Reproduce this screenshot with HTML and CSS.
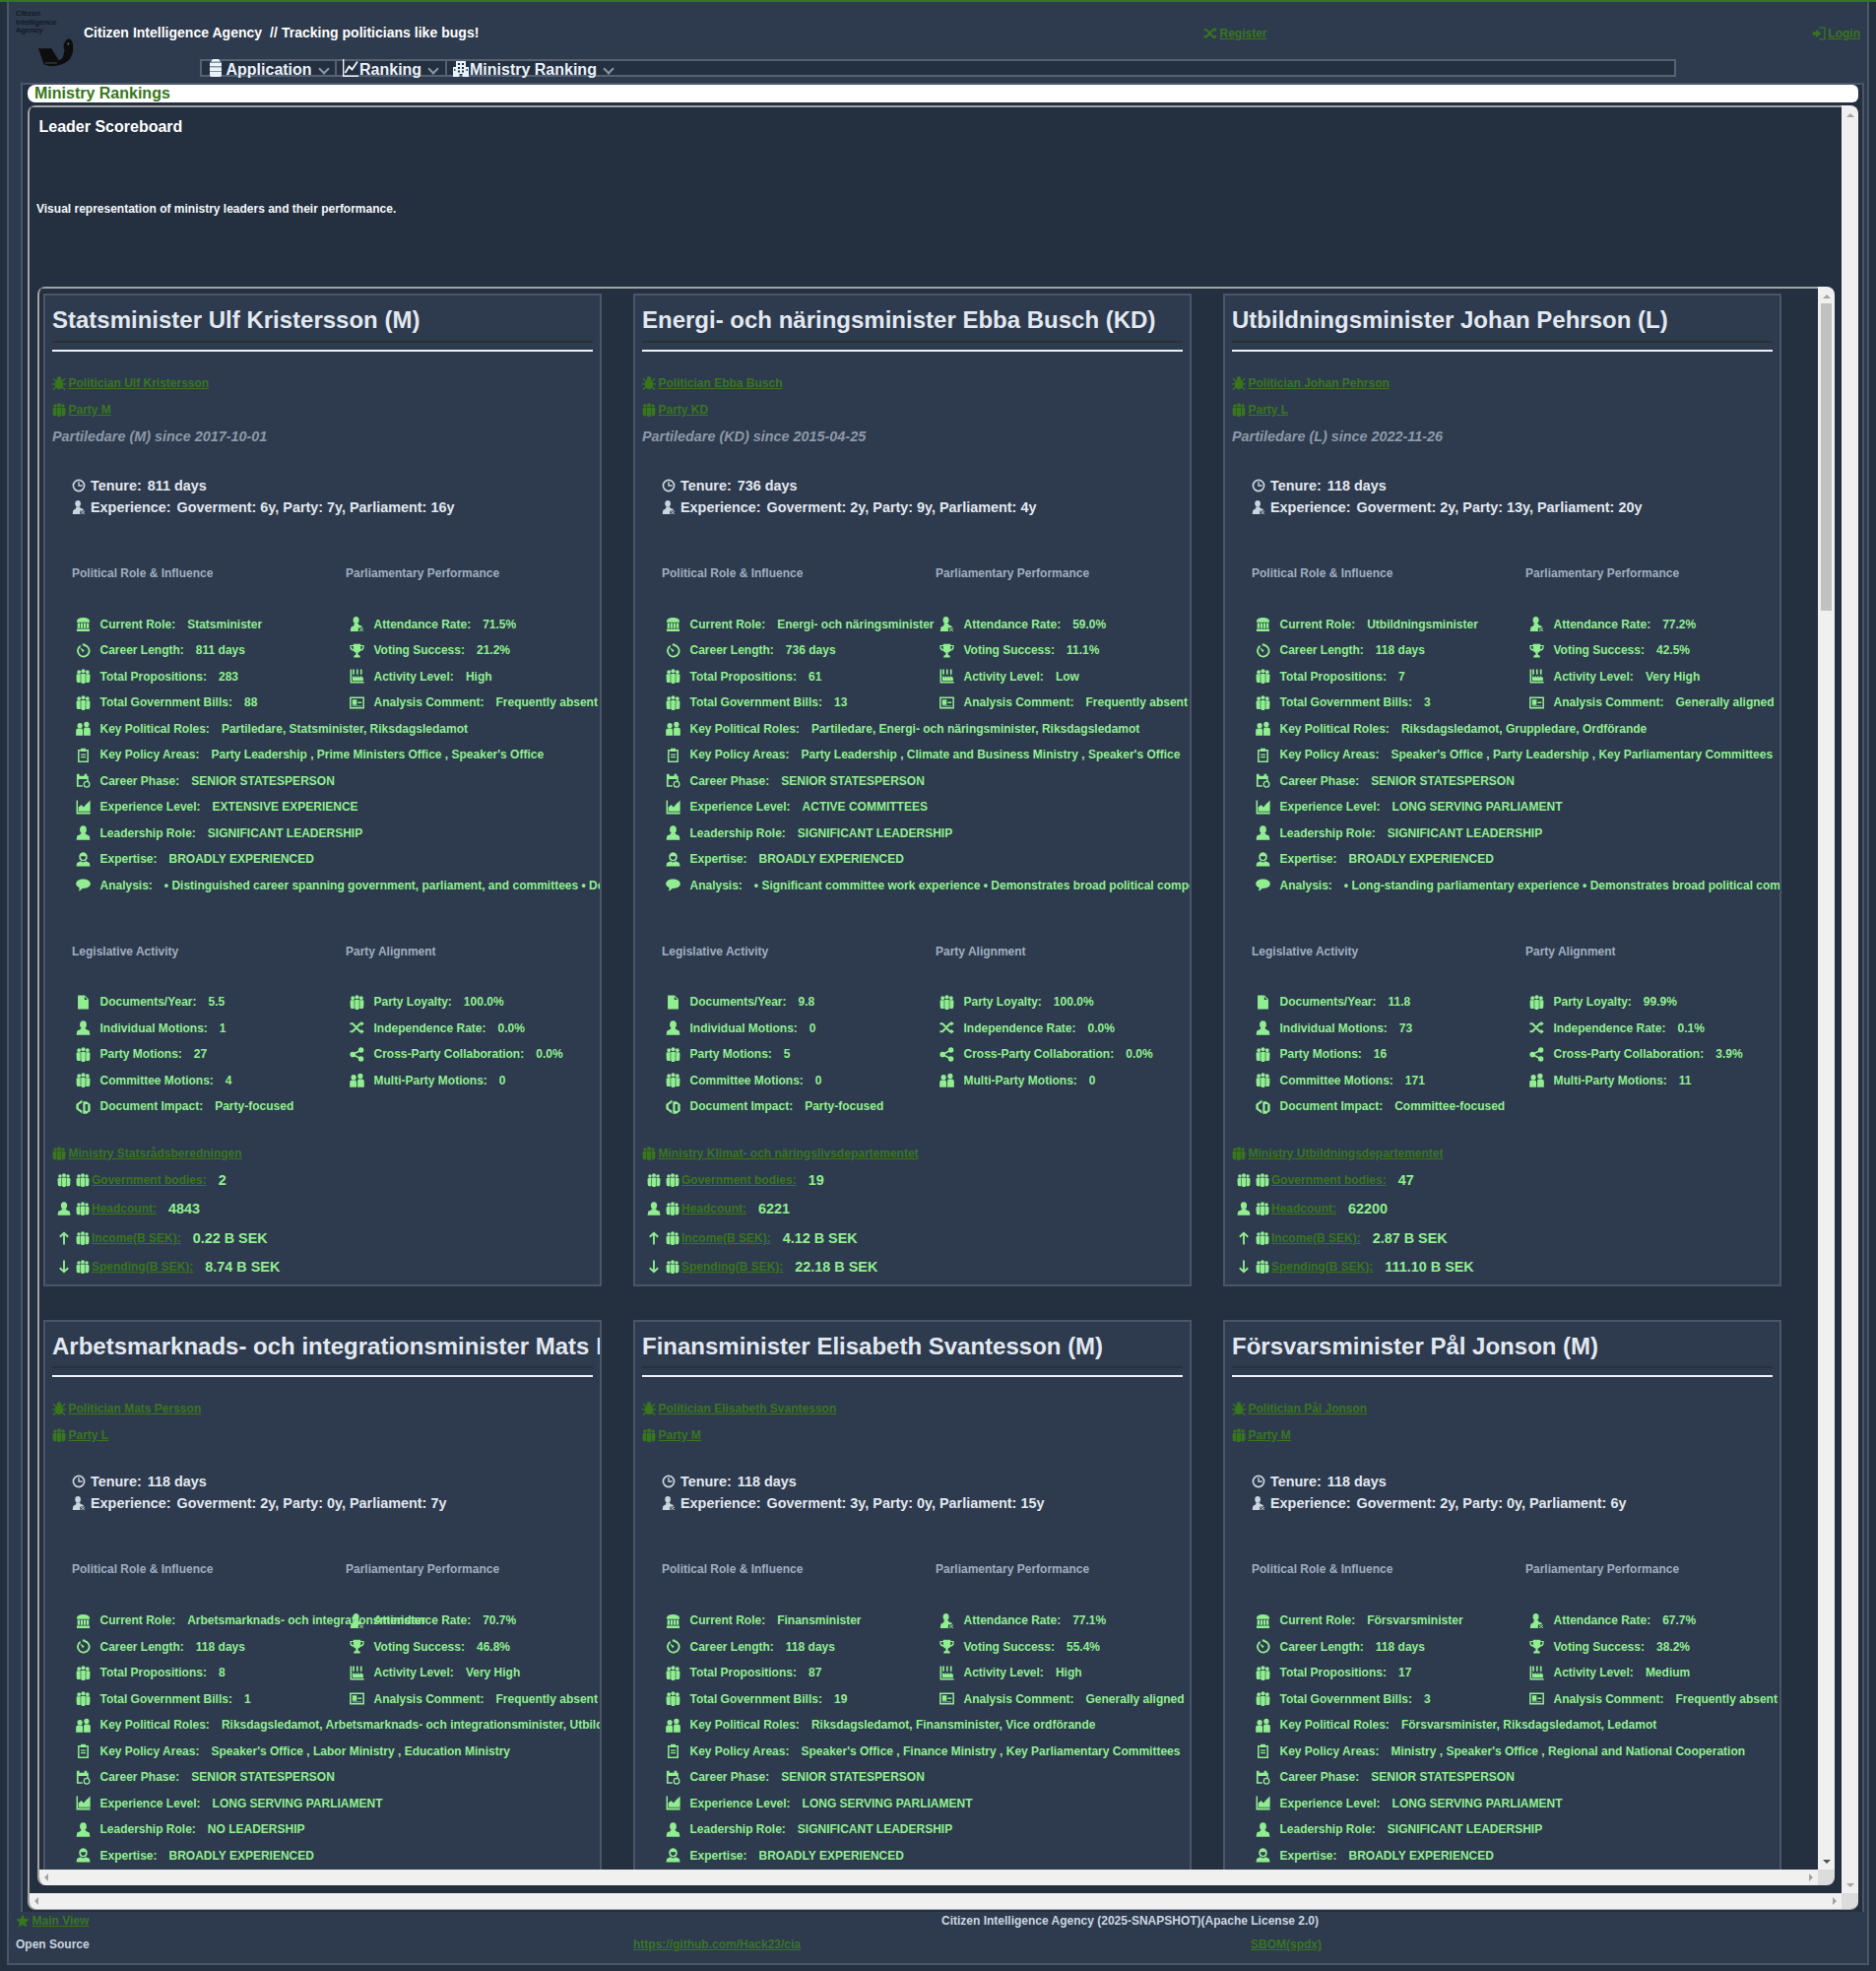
FILE: index.html
```html
<!DOCTYPE html>
<html>
<head>
    <title>Citizen Intelligence Agency</title>
    <link rel="stylesheet" href="styles.css">
</head>
<body>
<svg class="sprites" xmlns="http://www.w3.org/2000/svg">
    <symbol id="bug" viewBox="0 0 16 16"><ellipse cx="8" cy="9.400" rx="4.800" ry="5.800"/><circle cx="8" cy="3" r="2.600"/><path d="M1 2.500l4 3.500M15 2.500l-4 3.500M0 9h4M12 9h4M1 15.500l4-3.500M15 15.500l-4-3.500" stroke="currentColor" stroke-width="1.600"/></symbol>
    <symbol id="people" viewBox="0 0 16 16"><circle cx="3.400" cy="3.400" r="2"/><circle cx="12.600" cy="3.400" r="2"/><circle cx="8" cy="2.500" r="2.200"/><path d="M.6 7Q.6 5.600 2 5.600H5v9.400H2.500Q1 15 .8 13zM15.400 7Q15.400 5.600 14 5.600H11v9.400h2.500Q15 15 15.200 13zM5.600 5.200h4.800v9.200L9.400 16H6.600L5.600 14.400z"/></symbol>
    <symbol id="clock" viewBox="0 0 16 16"><circle cx="8" cy="8" r="6.400" fill="none" stroke="currentColor" stroke-width="1.900"/><path d="M7.200 3.600h1.600v3.600h3.400v1.600H7.200z"/></symbol>
    <symbol id="userx" viewBox="0 0 16 16"><ellipse cx="7" cy="3.800" rx="3.200" ry="3.800"/><path d="M4.800 7.500h4.400l1 1.600L13 10l1 2H9.500v4H.8l.7-4.500 3.300-2z"/><path d="M10.500 12.500l4.500 3.500M15 12.500l-4.500 3.500" stroke="currentColor" stroke-width="1"/></symbol>
    <symbol id="bank" viewBox="0 0 16 16"><path d="M1 5Q1.500 1 8 1T15 5V6.200H1zM1.800 7h2.600v5.400H1.800zM5.200 7h2.400v5.400H5.200zM8.400 7h2.400v5.400H8.400zM11.600 7h2.600v5.400h-2.600zM1 13.200h14V16H1z"/></symbol>
    <symbol id="timer" viewBox="0 0 16 16"><path d="M5 3A6.200 6.200 0 1 0 9 2.100" fill="none" stroke="currentColor" stroke-width="2"/><path d="M7.200.6h2.800v2H7.200zM4.200 4.600l5 3.200-1.600 2z"/></symbol>
    <symbol id="users" viewBox="0 0 16 16"><circle cx="4.400" cy="5" r="2.800"/><circle cx="11.600" cy="3.600" r="2.800"/><path d="M.2 15.600v-5Q.2 8 3 8h2.800Q7.600 8 7.600 10.600v5zM8.600 15.600V9.400Q8.600 6.800 10 6.800h3.200Q15.800 6.800 15.800 9.600v6z"/></symbol>
    <symbol id="clip" viewBox="0 0 16 16"><path d="M3 2.800h10V15.200H3z" fill="none" stroke="currentColor" stroke-width="1.600"/><path d="M5.400.8h5.200v3.400H5.400zM5.400 6.800h5.200v1.400H5.400zM5.400 9.600h5.200v1.400H5.400z"/></symbol>
    <symbol id="calclock" viewBox="0 0 16 16"><path d="M1 .8h2.800v2.200h5.400V.8h2.800v2.200h1.600v6h-1.600V6.400H2.800v6.600h4.400v1.600H1z"/><circle cx="11.800" cy="12" r="3" fill="none" stroke="currentColor" stroke-width="1.400"/></symbol>
    <symbol id="area" viewBox="0 0 16 16"><path d="M.6.600h1.600v12.600H15.600V15.400H.6z"/><path d="M2.800 12.400V8l3.200-2.600 2.400 2.600 3-3.400L15.600.6v11.800z"/></symbol>
    <symbol id="user" viewBox="0 0 16 16"><ellipse cx="8" cy="4.400" rx="3.600" ry="4.200"/><path d="M5.400 8.400h5.200l.4 1.200 3.600 1.600.8 4.400H.6l.8-4.400 3.600-1.600z"/></symbol>
    <symbol id="doctor" viewBox="0 0 16 16"><path fill-rule="evenodd" d="M8 .4a4.500 4.500 0 0 1 4.400 5.600q0 3.400-4.400 3.800-4.400-.4-4.400-3.800A4.500 4.500 0 0 1 8 .4zM5.400 4.400v1.800q.4 2 2.600 2.200 2.200-.2 2.600-2.200V4.400z"/><path d="M5 9.800 8 11.200l3-1.400 3.800 1.800.7 3.900H.5l.7-3.900z"/></symbol>
    <symbol id="comment" viewBox="0 0 16 16"><path d="M8 1.600c4.300 0 7.800 2.100 7.800 5S12.300 11.600 8 11.600l-.9 0Q5.600 14 2.800 14.400q1-1.400 1.100-3.600C1.800 10 .2 8.500.2 6.600.2 3.700 3.700 1.600 8 1.600z"/></symbol>
    <symbol id="file" viewBox="0 0 16 16"><path d="M2.200.6h7.400l4.200 4.200v10.600H2.200zM9.400 1.800v3.400h3.200z" fill-rule="evenodd"/></symbol>
    <symbol id="random" viewBox="0 0 16 16"><path d="M.5 3.500h2.800l8 8.500H13M.5 12h2.800l8-8.500H13" fill="none" stroke="currentColor" stroke-width="2.100"/><path d="M12.400.8l3.400 2.700-3.400 2.700zM12.400 9.300l3.400 2.700-3.400 2.700z"/></symbol>
    <symbol id="share" viewBox="0 0 16 16"><circle cx="3.400" cy="8" r="3"/><circle cx="12.400" cy="3.200" r="2.900"/><circle cx="12.400" cy="12.800" r="2.900"/><path d="M3.400 8l9-4.800M3.400 8l9 4.800" stroke="currentColor" stroke-width="1.800"/></symbol>
    <symbol id="trophy" viewBox="0 0 16 16"><path d="M4 .8h8V2h3.600v2.400Q15.400 7.800 11.800 8.200 11 9.800 9.200 10.200v2.200l2.200 1.200v1.800H4.600v-1.800l2.200-1.200v-2.200Q5 9.800 4.200 8.200.6 7.800.4 4.400V2H4zM1.800 3.200v1.200Q2 6 4 6.600V3.200zM14.200 3.200H12v3.400q2-.6 2.200-2.200z" fill-rule="evenodd"/></symbol>
    <symbol id="factory" viewBox="0 0 16 16"><path d="M.6.600h1.700v13.200H15.600v1.700H.6z"/><path d="M3.400.6h1.800v5.600H3.400zM7.400.6h1.800v5.600H7.400zM11.600.6h1.800v5.600h-1.800zM3.200 13V7.400l2.800 2.200V7.400l2.800 2.200V7.400l2.800 2.200V7.400l3.200 2.200V13z"/></symbol>
    <symbol id="idcard" viewBox="0 0 16 16"><path d="M.9 2.400h14.200v11.200H.9z" fill="none" stroke="currentColor" stroke-width="1.600"/><path d="M3 4.600h4.800v5.800H3zM9 7h4v1.400H9zM3 11.200h10v.9H3z"/></symbol>
    <symbol id="up" viewBox="0 0 16 16"><path d="M8 15.500V2M3.200 6.600 8 2l4.800 4.600" fill="none" stroke="currentColor" stroke-width="2.100"/></symbol>
    <symbol id="down" viewBox="0 0 16 16"><path d="M8 .5V14M3.200 9.400 8 14l4.800-4.600" fill="none" stroke="currentColor" stroke-width="2.100"/></symbol>
    <symbol id="impact" viewBox="0 0 16 16"><path d="M6.800.6.400 5.400v5.200L6.800 15.400V12.200L3 9.800V6.200L6.800 3.800z"/><path d="M7.800 2.400h3.800l4 2.800v7.600l-4 2.800H7.800zM10.200 5.400v7h2.800v-7z" fill-rule="evenodd"/></symbol>
    <symbol id="star" viewBox="0 0 16 16"><path d="M8 .5l2.300 5.200 5.500.5-4.200 3.700 1.300 5.600L8 12.600l-4.900 2.900 1.300-5.600L.2 6.200l5.500-.5z"/></symbol>
    <symbol id="signin" viewBox="0 0 16 16"><path d="M8 1.200h6.800v13.600H8" fill="none" stroke="currentColor" stroke-width="1.400"/><path d="M.8 6.200h4V3.400L10.800 8 4.800 12.600V9.800h-4z"/></symbol>
    <symbol id="server" viewBox="0 0 12 18"><path d="M3 0h6l2 2.800H1zM0 3.600h12v4H0zM0 8.200h12v4H0zM0 12.800h12v3.400q0 1.800-1.800 1.800H1.800Q0 18 0 16.200z"/></symbol>
    <symbol id="line" viewBox="0 0 16 18"><path d="M.7 0v17.200H16" fill="none" stroke="currentColor" stroke-width="1.400"/><path d="M2.500 14l4-6.500 3 3L15 2.500" fill="none" stroke="currentColor" stroke-width="1.800"/></symbol>
    <symbol id="building" viewBox="0 0 16 18"><path fill-rule="evenodd" d="M3 2h10v6h3v10H9.500v-3h-3v3H0V8h3zM5 4v2h2V4zM9 4v2h2V4zM5 8v2h2V8zM9 8v2h2V8zM5 11.500v2h2v-2zM9 11.500v2h2v-2zM1.200 10v2h1.200v-2zM13.500 10v2h1.300v-2z"/></symbol>
</svg>

<div class="app">
    <div class="top">
        <div class="logo">
            <div class="logo-text">Citizen<br>Intelligence<br>Agency</div>
            <svg class="logo-mark" viewBox="0 0 40 32"><path d="M1 11H15L23 24l4-3 2-8Q27 8 29 5 31 0 35 1 38 3 38 8 39 18 33 24 26 30 14 30L7 28z"/><path d="M8 26.500h13" stroke="#6b7684" stroke-width=".6"/><circle cx="33" cy="6" r="1" fill="#6b7684"/></svg>
        </div>
        <div class="top-row">
            <div class="brand">Citizen Intelligence Agency &nbsp;// Tracking politicians like bugs!</div>
            <div class="top-link"><svg class="ic-link"><use href="#random"/></svg><a href="#">Register</a></div>
            <div class="top-link"><svg class="ic-link"><use href="#signin"/></svg><a href="#">Login</a></div>
        </div>
        <nav class="menu">
            <div class="menu-item first"><svg class="menu-ic narrow"><use href="#server"/></svg>Application<i class="chev"></i></div>
            <div class="menu-item second"><svg class="menu-ic"><use href="#line"/></svg>Ranking<i class="chev"></i></div>
            <div class="menu-item last"><svg class="menu-ic"><use href="#building"/></svg>Ministry Ranking<i class="chev"></i></div>
        </nav>
    </div>

    <section class="tabs">
        <div class="tab-title">Ministry Rankings</div>
        <div class="scroller outer">
            <div class="scroll-body">
                <h3 class="board-title">Leader Scoreboard</h3>
                <p class="board-sub">Visual representation of ministry leaders and their performance.</p>

                <div class="scroller inner">
                    <div class="scroll-body cards">

                        <article class="card">
                            <h2>Statsminister Ulf Kristersson (M)</h2>
                            <hr>
                            <div class="link-row first"><svg class="ic-link"><use href="#bug"/></svg><a href="#">Politician Ulf Kristersson</a></div>
                            <div class="link-row"><svg class="ic-link"><use href="#people"/></svg><a href="#">Party M</a></div>
                            <div class="since">Partiledare (M) since 2017-10-01</div>
                            <div class="summary">
                                <div><svg class="ic-sum"><use href="#clock"/></svg><b>Tenure:</b>811 days</div>
                                <div><svg class="ic-sum"><use href="#userx"/></svg><b>Experience:</b>Goverment: 6y, Party: 7y, Parliament: 16y</div>
                            </div>
                            <div class="heads"><h4>Political Role &amp; Influence</h4><h4>Parliamentary Performance</h4></div>
                            <div class="stats">
                                <div class="stat"><svg class="ic"><use href="#bank"/></svg><b>Current Role:</b>Statsminister</div>
                                <div class="stat"><svg class="ic"><use href="#userx"/></svg><b>Attendance Rate:</b>71.5%</div>
                                <div class="stat"><svg class="ic"><use href="#timer"/></svg><b>Career Length:</b>811 days</div>
                                <div class="stat"><svg class="ic"><use href="#trophy"/></svg><b>Voting Success:</b>21.2%</div>
                                <div class="stat"><svg class="ic"><use href="#people"/></svg><b>Total Propositions:</b>283</div>
                                <div class="stat"><svg class="ic"><use href="#factory"/></svg><b>Activity Level:</b>High</div>
                                <div class="stat"><svg class="ic"><use href="#people"/></svg><b>Total Government Bills:</b>88</div>
                                <div class="stat"><svg class="ic"><use href="#idcard"/></svg><b>Analysis Comment:</b>Frequently absent</div>
                                <div class="stat wide"><svg class="ic"><use href="#users"/></svg><b>Key Political Roles:</b>Partiledare, Statsminister, Riksdagsledamot</div>
                                <div class="stat wide"><svg class="ic"><use href="#clip"/></svg><b>Key Policy Areas:</b>Party Leadership , Prime Ministers Office , Speaker's Office</div>
                                <div class="stat wide"><svg class="ic"><use href="#calclock"/></svg><b>Career Phase:</b>SENIOR STATESPERSON</div>
                                <div class="stat wide"><svg class="ic"><use href="#area"/></svg><b>Experience Level:</b>EXTENSIVE EXPERIENCE</div>
                                <div class="stat wide"><svg class="ic"><use href="#user"/></svg><b>Leadership Role:</b>SIGNIFICANT LEADERSHIP</div>
                                <div class="stat wide"><svg class="ic"><use href="#doctor"/></svg><b>Expertise:</b>BROADLY EXPERIENCED</div>
                                <div class="stat wide"><svg class="ic"><use href="#comment"/></svg><b>Analysis:</b>• Distinguished career spanning government, parliament, and committees • Demonstrates broad political competence</div>
                            </div>
                            <div class="heads second"><h4>Legislative Activity</h4><h4>Party Alignment</h4></div>
                            <div class="stats">
                                <div class="stat"><svg class="ic"><use href="#file"/></svg><b>Documents/Year:</b>5.5</div>
                                <div class="stat"><svg class="ic"><use href="#people"/></svg><b>Party Loyalty:</b>100.0%</div>
                                <div class="stat"><svg class="ic"><use href="#user"/></svg><b>Individual Motions:</b>1</div>
                                <div class="stat"><svg class="ic"><use href="#random"/></svg><b>Independence Rate:</b>0.0%</div>
                                <div class="stat"><svg class="ic"><use href="#people"/></svg><b>Party Motions:</b>27</div>
                                <div class="stat"><svg class="ic"><use href="#share"/></svg><b>Cross-Party Collaboration:</b>0.0%</div>
                                <div class="stat"><svg class="ic"><use href="#people"/></svg><b>Committee Motions:</b>4</div>
                                <div class="stat"><svg class="ic"><use href="#users"/></svg><b>Multi-Party Motions:</b>0</div>
                                <div class="stat"><svg class="ic"><use href="#impact"/></svg><b>Document Impact:</b>Party-focused</div>
                            </div>
                            <div class="link-row ministry"><svg class="ic-link"><use href="#people"/></svg><a href="#">Ministry Statsrådsberedningen</a></div>
                            <div class="money first"><svg class="ic-money"><use href="#people"/></svg><svg class="ic-money"><use href="#people"/></svg><a href="#">Government bodies:</a><b>2</b></div>
                            <div class="money"><svg class="ic-money"><use href="#user"/></svg><svg class="ic-money"><use href="#people"/></svg><a href="#">Headcount:</a><b>4843</b></div>
                            <div class="money"><svg class="ic-money"><use href="#up"/></svg><svg class="ic-money"><use href="#people"/></svg><a href="#">Income(B SEK):</a><b>0.22 B SEK</b></div>
                            <div class="money"><svg class="ic-money"><use href="#down"/></svg><svg class="ic-money"><use href="#people"/></svg><a href="#">Spending(B SEK):</a><b>8.74 B SEK</b></div>
                        </article>

                        <article class="card">
                            <h2>Energi- och näringsminister Ebba Busch (KD)</h2>
                            <hr>
                            <div class="link-row first"><svg class="ic-link"><use href="#bug"/></svg><a href="#">Politician Ebba Busch</a></div>
                            <div class="link-row"><svg class="ic-link"><use href="#people"/></svg><a href="#">Party KD</a></div>
                            <div class="since">Partiledare (KD) since 2015-04-25</div>
                            <div class="summary">
                                <div><svg class="ic-sum"><use href="#clock"/></svg><b>Tenure:</b>736 days</div>
                                <div><svg class="ic-sum"><use href="#userx"/></svg><b>Experience:</b>Goverment: 2y, Party: 9y, Parliament: 4y</div>
                            </div>
                            <div class="heads"><h4>Political Role &amp; Influence</h4><h4>Parliamentary Performance</h4></div>
                            <div class="stats">
                                <div class="stat"><svg class="ic"><use href="#bank"/></svg><b>Current Role:</b>Energi- och näringsminister</div>
                                <div class="stat"><svg class="ic"><use href="#userx"/></svg><b>Attendance Rate:</b>59.0%</div>
                                <div class="stat"><svg class="ic"><use href="#timer"/></svg><b>Career Length:</b>736 days</div>
                                <div class="stat"><svg class="ic"><use href="#trophy"/></svg><b>Voting Success:</b>11.1%</div>
                                <div class="stat"><svg class="ic"><use href="#people"/></svg><b>Total Propositions:</b>61</div>
                                <div class="stat"><svg class="ic"><use href="#factory"/></svg><b>Activity Level:</b>Low</div>
                                <div class="stat"><svg class="ic"><use href="#people"/></svg><b>Total Government Bills:</b>13</div>
                                <div class="stat"><svg class="ic"><use href="#idcard"/></svg><b>Analysis Comment:</b>Frequently absent</div>
                                <div class="stat wide"><svg class="ic"><use href="#users"/></svg><b>Key Political Roles:</b>Partiledare, Energi- och näringsminister, Riksdagsledamot</div>
                                <div class="stat wide"><svg class="ic"><use href="#clip"/></svg><b>Key Policy Areas:</b>Party Leadership , Climate and Business Ministry , Speaker's Office</div>
                                <div class="stat wide"><svg class="ic"><use href="#calclock"/></svg><b>Career Phase:</b>SENIOR STATESPERSON</div>
                                <div class="stat wide"><svg class="ic"><use href="#area"/></svg><b>Experience Level:</b>ACTIVE COMMITTEES</div>
                                <div class="stat wide"><svg class="ic"><use href="#user"/></svg><b>Leadership Role:</b>SIGNIFICANT LEADERSHIP</div>
                                <div class="stat wide"><svg class="ic"><use href="#doctor"/></svg><b>Expertise:</b>BROADLY EXPERIENCED</div>
                                <div class="stat wide"><svg class="ic"><use href="#comment"/></svg><b>Analysis:</b>• Significant committee work experience • Demonstrates broad political competence</div>
                            </div>
                            <div class="heads second"><h4>Legislative Activity</h4><h4>Party Alignment</h4></div>
                            <div class="stats">
                                <div class="stat"><svg class="ic"><use href="#file"/></svg><b>Documents/Year:</b>9.8</div>
                                <div class="stat"><svg class="ic"><use href="#people"/></svg><b>Party Loyalty:</b>100.0%</div>
                                <div class="stat"><svg class="ic"><use href="#user"/></svg><b>Individual Motions:</b>0</div>
                                <div class="stat"><svg class="ic"><use href="#random"/></svg><b>Independence Rate:</b>0.0%</div>
                                <div class="stat"><svg class="ic"><use href="#people"/></svg><b>Party Motions:</b>5</div>
                                <div class="stat"><svg class="ic"><use href="#share"/></svg><b>Cross-Party Collaboration:</b>0.0%</div>
                                <div class="stat"><svg class="ic"><use href="#people"/></svg><b>Committee Motions:</b>0</div>
                                <div class="stat"><svg class="ic"><use href="#users"/></svg><b>Multi-Party Motions:</b>0</div>
                                <div class="stat"><svg class="ic"><use href="#impact"/></svg><b>Document Impact:</b>Party-focused</div>
                            </div>
                            <div class="link-row ministry"><svg class="ic-link"><use href="#people"/></svg><a href="#">Ministry Klimat- och näringslivsdepartementet</a></div>
                            <div class="money first"><svg class="ic-money"><use href="#people"/></svg><svg class="ic-money"><use href="#people"/></svg><a href="#">Government bodies:</a><b>19</b></div>
                            <div class="money"><svg class="ic-money"><use href="#user"/></svg><svg class="ic-money"><use href="#people"/></svg><a href="#">Headcount:</a><b>6221</b></div>
                            <div class="money"><svg class="ic-money"><use href="#up"/></svg><svg class="ic-money"><use href="#people"/></svg><a href="#">Income(B SEK):</a><b>4.12 B SEK</b></div>
                            <div class="money"><svg class="ic-money"><use href="#down"/></svg><svg class="ic-money"><use href="#people"/></svg><a href="#">Spending(B SEK):</a><b>22.18 B SEK</b></div>
                        </article>

                        <article class="card">
                            <h2>Utbildningsminister Johan Pehrson (L)</h2>
                            <hr>
                            <div class="link-row first"><svg class="ic-link"><use href="#bug"/></svg><a href="#">Politician Johan Pehrson</a></div>
                            <div class="link-row"><svg class="ic-link"><use href="#people"/></svg><a href="#">Party L</a></div>
                            <div class="since">Partiledare (L) since 2022-11-26</div>
                            <div class="summary">
                                <div><svg class="ic-sum"><use href="#clock"/></svg><b>Tenure:</b>118 days</div>
                                <div><svg class="ic-sum"><use href="#userx"/></svg><b>Experience:</b>Goverment: 2y, Party: 13y, Parliament: 20y</div>
                            </div>
                            <div class="heads"><h4>Political Role &amp; Influence</h4><h4>Parliamentary Performance</h4></div>
                            <div class="stats">
                                <div class="stat"><svg class="ic"><use href="#bank"/></svg><b>Current Role:</b>Utbildningsminister</div>
                                <div class="stat"><svg class="ic"><use href="#userx"/></svg><b>Attendance Rate:</b>77.2%</div>
                                <div class="stat"><svg class="ic"><use href="#timer"/></svg><b>Career Length:</b>118 days</div>
                                <div class="stat"><svg class="ic"><use href="#trophy"/></svg><b>Voting Success:</b>42.5%</div>
                                <div class="stat"><svg class="ic"><use href="#people"/></svg><b>Total Propositions:</b>7</div>
                                <div class="stat"><svg class="ic"><use href="#factory"/></svg><b>Activity Level:</b>Very High</div>
                                <div class="stat"><svg class="ic"><use href="#people"/></svg><b>Total Government Bills:</b>3</div>
                                <div class="stat"><svg class="ic"><use href="#idcard"/></svg><b>Analysis Comment:</b>Generally aligned</div>
                                <div class="stat wide"><svg class="ic"><use href="#users"/></svg><b>Key Political Roles:</b>Riksdagsledamot, Gruppledare, Ordförande</div>
                                <div class="stat wide"><svg class="ic"><use href="#clip"/></svg><b>Key Policy Areas:</b>Speaker's Office , Party Leadership , Key Parliamentary Committees</div>
                                <div class="stat wide"><svg class="ic"><use href="#calclock"/></svg><b>Career Phase:</b>SENIOR STATESPERSON</div>
                                <div class="stat wide"><svg class="ic"><use href="#area"/></svg><b>Experience Level:</b>LONG SERVING PARLIAMENT</div>
                                <div class="stat wide"><svg class="ic"><use href="#user"/></svg><b>Leadership Role:</b>SIGNIFICANT LEADERSHIP</div>
                                <div class="stat wide"><svg class="ic"><use href="#doctor"/></svg><b>Expertise:</b>BROADLY EXPERIENCED</div>
                                <div class="stat wide"><svg class="ic"><use href="#comment"/></svg><b>Analysis:</b>• Long-standing parliamentary experience • Demonstrates broad political competence</div>
                            </div>
                            <div class="heads second"><h4>Legislative Activity</h4><h4>Party Alignment</h4></div>
                            <div class="stats">
                                <div class="stat"><svg class="ic"><use href="#file"/></svg><b>Documents/Year:</b>11.8</div>
                                <div class="stat"><svg class="ic"><use href="#people"/></svg><b>Party Loyalty:</b>99.9%</div>
                                <div class="stat"><svg class="ic"><use href="#user"/></svg><b>Individual Motions:</b>73</div>
                                <div class="stat"><svg class="ic"><use href="#random"/></svg><b>Independence Rate:</b>0.1%</div>
                                <div class="stat"><svg class="ic"><use href="#people"/></svg><b>Party Motions:</b>16</div>
                                <div class="stat"><svg class="ic"><use href="#share"/></svg><b>Cross-Party Collaboration:</b>3.9%</div>
                                <div class="stat"><svg class="ic"><use href="#people"/></svg><b>Committee Motions:</b>171</div>
                                <div class="stat"><svg class="ic"><use href="#users"/></svg><b>Multi-Party Motions:</b>11</div>
                                <div class="stat"><svg class="ic"><use href="#impact"/></svg><b>Document Impact:</b>Committee-focused</div>
                            </div>
                            <div class="link-row ministry"><svg class="ic-link"><use href="#people"/></svg><a href="#">Ministry Utbildningsdepartementet</a></div>
                            <div class="money first"><svg class="ic-money"><use href="#people"/></svg><svg class="ic-money"><use href="#people"/></svg><a href="#">Government bodies:</a><b>47</b></div>
                            <div class="money"><svg class="ic-money"><use href="#user"/></svg><svg class="ic-money"><use href="#people"/></svg><a href="#">Headcount:</a><b>62200</b></div>
                            <div class="money"><svg class="ic-money"><use href="#up"/></svg><svg class="ic-money"><use href="#people"/></svg><a href="#">Income(B SEK):</a><b>2.87 B SEK</b></div>
                            <div class="money"><svg class="ic-money"><use href="#down"/></svg><svg class="ic-money"><use href="#people"/></svg><a href="#">Spending(B SEK):</a><b>111.10 B SEK</b></div>
                        </article>

                        <article class="card">
                            <h2>Arbetsmarknads- och integrationsminister Mats Persson (L)</h2>
                            <hr>
                            <div class="link-row first"><svg class="ic-link"><use href="#bug"/></svg><a href="#">Politician Mats Persson</a></div>
                            <div class="link-row"><svg class="ic-link"><use href="#people"/></svg><a href="#">Party L</a></div>
                            <div class="summary">
                                <div><svg class="ic-sum"><use href="#clock"/></svg><b>Tenure:</b>118 days</div>
                                <div><svg class="ic-sum"><use href="#userx"/></svg><b>Experience:</b>Goverment: 2y, Party: 0y, Parliament: 7y</div>
                            </div>
                            <div class="heads"><h4>Political Role &amp; Influence</h4><h4>Parliamentary Performance</h4></div>
                            <div class="stats">
                                <div class="stat"><svg class="ic"><use href="#bank"/></svg><b>Current Role:</b>Arbetsmarknads- och integrationsminister</div>
                                <div class="stat"><svg class="ic"><use href="#userx"/></svg><b>Attendance Rate:</b>70.7%</div>
                                <div class="stat"><svg class="ic"><use href="#timer"/></svg><b>Career Length:</b>118 days</div>
                                <div class="stat"><svg class="ic"><use href="#trophy"/></svg><b>Voting Success:</b>46.8%</div>
                                <div class="stat"><svg class="ic"><use href="#people"/></svg><b>Total Propositions:</b>8</div>
                                <div class="stat"><svg class="ic"><use href="#factory"/></svg><b>Activity Level:</b>Very High</div>
                                <div class="stat"><svg class="ic"><use href="#people"/></svg><b>Total Government Bills:</b>1</div>
                                <div class="stat"><svg class="ic"><use href="#idcard"/></svg><b>Analysis Comment:</b>Frequently absent</div>
                                <div class="stat wide"><svg class="ic"><use href="#users"/></svg><b>Key Political Roles:</b>Riksdagsledamot, Arbetsmarknads- och integrationsminister, Utbildningsutskottet</div>
                                <div class="stat wide"><svg class="ic"><use href="#clip"/></svg><b>Key Policy Areas:</b>Speaker's Office , Labor Ministry , Education Ministry</div>
                                <div class="stat wide"><svg class="ic"><use href="#calclock"/></svg><b>Career Phase:</b>SENIOR STATESPERSON</div>
                                <div class="stat wide"><svg class="ic"><use href="#area"/></svg><b>Experience Level:</b>LONG SERVING PARLIAMENT</div>
                                <div class="stat wide"><svg class="ic"><use href="#user"/></svg><b>Leadership Role:</b>NO LEADERSHIP</div>
                                <div class="stat wide"><svg class="ic"><use href="#doctor"/></svg><b>Expertise:</b>BROADLY EXPERIENCED</div>
                            </div>
                        </article>

                        <article class="card">
                            <h2>Finansminister Elisabeth Svantesson (M)</h2>
                            <hr>
                            <div class="link-row first"><svg class="ic-link"><use href="#bug"/></svg><a href="#">Politician Elisabeth Svantesson</a></div>
                            <div class="link-row"><svg class="ic-link"><use href="#people"/></svg><a href="#">Party M</a></div>
                            <div class="summary">
                                <div><svg class="ic-sum"><use href="#clock"/></svg><b>Tenure:</b>118 days</div>
                                <div><svg class="ic-sum"><use href="#userx"/></svg><b>Experience:</b>Goverment: 3y, Party: 0y, Parliament: 15y</div>
                            </div>
                            <div class="heads"><h4>Political Role &amp; Influence</h4><h4>Parliamentary Performance</h4></div>
                            <div class="stats">
                                <div class="stat"><svg class="ic"><use href="#bank"/></svg><b>Current Role:</b>Finansminister</div>
                                <div class="stat"><svg class="ic"><use href="#userx"/></svg><b>Attendance Rate:</b>77.1%</div>
                                <div class="stat"><svg class="ic"><use href="#timer"/></svg><b>Career Length:</b>118 days</div>
                                <div class="stat"><svg class="ic"><use href="#trophy"/></svg><b>Voting Success:</b>55.4%</div>
                                <div class="stat"><svg class="ic"><use href="#people"/></svg><b>Total Propositions:</b>87</div>
                                <div class="stat"><svg class="ic"><use href="#factory"/></svg><b>Activity Level:</b>High</div>
                                <div class="stat"><svg class="ic"><use href="#people"/></svg><b>Total Government Bills:</b>19</div>
                                <div class="stat"><svg class="ic"><use href="#idcard"/></svg><b>Analysis Comment:</b>Generally aligned</div>
                                <div class="stat wide"><svg class="ic"><use href="#users"/></svg><b>Key Political Roles:</b>Riksdagsledamot, Finansminister, Vice ordförande</div>
                                <div class="stat wide"><svg class="ic"><use href="#clip"/></svg><b>Key Policy Areas:</b>Speaker's Office , Finance Ministry , Key Parliamentary Committees</div>
                                <div class="stat wide"><svg class="ic"><use href="#calclock"/></svg><b>Career Phase:</b>SENIOR STATESPERSON</div>
                                <div class="stat wide"><svg class="ic"><use href="#area"/></svg><b>Experience Level:</b>LONG SERVING PARLIAMENT</div>
                                <div class="stat wide"><svg class="ic"><use href="#user"/></svg><b>Leadership Role:</b>SIGNIFICANT LEADERSHIP</div>
                                <div class="stat wide"><svg class="ic"><use href="#doctor"/></svg><b>Expertise:</b>BROADLY EXPERIENCED</div>
                            </div>
                        </article>

                        <article class="card">
                            <h2>Försvarsminister Pål Jonson (M)</h2>
                            <hr>
                            <div class="link-row first"><svg class="ic-link"><use href="#bug"/></svg><a href="#">Politician Pål Jonson</a></div>
                            <div class="link-row"><svg class="ic-link"><use href="#people"/></svg><a href="#">Party M</a></div>
                            <div class="summary">
                                <div><svg class="ic-sum"><use href="#clock"/></svg><b>Tenure:</b>118 days</div>
                                <div><svg class="ic-sum"><use href="#userx"/></svg><b>Experience:</b>Goverment: 2y, Party: 0y, Parliament: 6y</div>
                            </div>
                            <div class="heads"><h4>Political Role &amp; Influence</h4><h4>Parliamentary Performance</h4></div>
                            <div class="stats">
                                <div class="stat"><svg class="ic"><use href="#bank"/></svg><b>Current Role:</b>Försvarsminister</div>
                                <div class="stat"><svg class="ic"><use href="#userx"/></svg><b>Attendance Rate:</b>67.7%</div>
                                <div class="stat"><svg class="ic"><use href="#timer"/></svg><b>Career Length:</b>118 days</div>
                                <div class="stat"><svg class="ic"><use href="#trophy"/></svg><b>Voting Success:</b>38.2%</div>
                                <div class="stat"><svg class="ic"><use href="#people"/></svg><b>Total Propositions:</b>17</div>
                                <div class="stat"><svg class="ic"><use href="#factory"/></svg><b>Activity Level:</b>Medium</div>
                                <div class="stat"><svg class="ic"><use href="#people"/></svg><b>Total Government Bills:</b>3</div>
                                <div class="stat"><svg class="ic"><use href="#idcard"/></svg><b>Analysis Comment:</b>Frequently absent</div>
                                <div class="stat wide"><svg class="ic"><use href="#users"/></svg><b>Key Political Roles:</b>Försvarsminister, Riksdagsledamot, Ledamot</div>
                                <div class="stat wide"><svg class="ic"><use href="#clip"/></svg><b>Key Policy Areas:</b>Ministry , Speaker's Office , Regional and National Cooperation</div>
                                <div class="stat wide"><svg class="ic"><use href="#calclock"/></svg><b>Career Phase:</b>SENIOR STATESPERSON</div>
                                <div class="stat wide"><svg class="ic"><use href="#area"/></svg><b>Experience Level:</b>LONG SERVING PARLIAMENT</div>
                                <div class="stat wide"><svg class="ic"><use href="#user"/></svg><b>Leadership Role:</b>SIGNIFICANT LEADERSHIP</div>
                                <div class="stat wide"><svg class="ic"><use href="#doctor"/></svg><b>Expertise:</b>BROADLY EXPERIENCED</div>
                            </div>
                        </article>

                    </div>
                    <div class="vbar"><i class="arrow-up"></i><span class="thumb"></span><i class="arrow-down dark"></i></div>
                    <div class="hbar"><i class="arrow-left"></i><i class="arrow-right"></i></div>
                    <div class="corner"></div>
                </div>
            </div>
            <div class="vbar"><i class="arrow-up"></i><i class="arrow-down"></i></div>
            <div class="hbar"><i class="arrow-left"></i><i class="arrow-right"></i></div>
            <div class="corner"></div>
        </div>
    </section>

    <footer class="foot">
        <div class="foot-row two">
            <div><svg class="ic-link"><use href="#star"/></svg><a href="#">Main View</a></div>
            <div>Citizen Intelligence Agency (2025-SNAPSHOT)(Apache License 2.0)</div>
        </div>
        <div class="foot-row three">
            <div>Open Source</div>
            <div><a href="#">https://github.com/Hack23/cia</a></div>
            <div><a href="#">SBOM(spdx)</a></div>
        </div>
    </footer>
</div>
</body>
</html>
```

FILE: styles.css
```css
html, body {
    margin: 0;
    padding: 0;
}

body {
    height: 2001px;
    overflow: hidden;
    background-color: #242f3f;
    border-top: 2px solid #38761d;
    box-sizing: border-box;
    font: bold 12px "Liberation Sans", Arial, sans-serif;
    color: #cbd5e0;
}

a {
    color: #38761d;
    text-decoration: underline;
}

svg {
    fill: currentColor;
    flex: none;
}

.sprites {
    display: none;
}

.app {
    width: 1891px;
    height: 1993px;
    margin-left: 7px;
    box-sizing: border-box;
    background-color: #2e3b4e;
    border-left: 2px solid #4a5568;
    border-right: 2px solid #4a5568;
    border-bottom: 2px solid #4a5568;
}

/* header */
.top {
    display: grid;
    grid-template-columns: 76px 1fr;
    grid-template-rows: 58px 18px;
    height: 82px;
}

.logo {
    grid-row: 1 / 3;
    padding: 8px 0 0 7px;
}

.logo-text {
    font-size: 8px;
    line-height: 8.5px;
    font-weight: normal;
    color: #10151c;
    letter-spacing: 0.1px;
    -webkit-text-stroke: 0.2px #10151c;
}

.logo-mark {
    display: block;
    width: 38px;
    height: 32px;
    margin: 2px 0 0 22px;
    fill: #0d0d0d;
}

.top-row {
    display: grid;
    grid-template-columns: 1137px 1fr auto;
    padding: 23px 7px 0 0;
    align-items: start;
}

.brand {
    font-size: 14px;
    line-height: 16px;
    word-spacing: 0.15px;
    color: #fff;
}

.top-link {
    display: flex;
    align-items: center;
    gap: 2.5px;
    line-height: 18px;
    color: #38761d;
}

.ic-link {
    width: 14px;
    height: 14px;
    color: #38761d;
}

.menu {
    display: flex;
    align-items: center;
    width: 1499px;
    margin-left: 118px;
    box-sizing: border-box;
    background-color: #242f3f;
    border: 2px solid #566273;
    font-size: 16px;
    line-height: 14px;
    color: #eaf2fb;
}

.menu-item {
    display: flex;
    align-items: center;
    height: 14px;
    box-sizing: border-box;
    padding: 4px 0 0 6px;
    border-right: 2px solid #566273;
    white-space: nowrap;
}

.menu-item.first {
    width: 137px;
    padding-left: 8px;
}

.menu-item.second {
    width: 112px;
}

.menu-item.last {
    border-right: none;
}

.menu-ic {
    width: 16px;
    height: 18px;
    margin-top: -4px;
    margin-right: 1px;
}

.menu-ic.narrow {
    width: 12px;
    margin-right: 4.5px;
}

.chev {
    width: 6px;
    height: 6px;
    margin: -3px 0 0 8px;
    border-right: 2px solid #8a97a8;
    border-bottom: 2px solid #8a97a8;
    transform: rotate(45deg);
}

/* tabsheet */
.tabs {
    width: 1872px;
    height: 1857px;
    margin-left: 12px;
    box-sizing: border-box;
    padding: 0 4px 0 5px;
    background-color: #242f3f;
    border-top: 2px solid #4a5568;
    border-left: 2px solid #4a5568;
    border-right: 2px solid #4a5568;
}

.tab-title {
    height: 18px;
    line-height: 18px;
    padding-left: 7px;
    background-color: #fff;
    border-radius: 8px 6px 6px 8px;
    color: #38761d;
    font-size: 16px;
    margin-bottom: 3px;
}

.scroller {
    display: grid;
    grid-template-columns: 1fr 17px;
    grid-template-rows: 1fr 16px;
    overflow: hidden;
    box-sizing: border-box;
    border-left: 2px solid #a3a3a3;
    background-color: #242f3f;
}

.scroller.outer {
    height: 1832px;
    border-radius: 8px;
    border-bottom: 1px solid #a3a3a3;
}

.scroller.inner {
    width: 1825px;
    height: 1623px;
    margin-left: 8px;
    border-radius: 8px;
}

.scroll-body {
    min-width: 0;
    min-height: 0;
    overflow: hidden;
    border-top: 2px solid #a3a3a3;
}

.vbar {
    display: flex;
    flex-direction: column;
    align-items: center;
    background-color: #f0f0f0;
    padding: 8px 0 6px;
}

.hbar {
    display: flex;
    justify-content: space-between;
    align-items: center;
    background-color: #f0f0f0;
    padding: 0 5px;
}

.corner {
    background-color: #dcdcdc;
}

.thumb {
    width: 11px;
    height: 312px;
    margin: 5px 0 auto;
    background-color: #c1c1c1;
}

.arrow-up, .arrow-down {
    width: 0;
    height: 0;
    border-left: 4px solid transparent;
    border-right: 4px solid transparent;
}

.arrow-up {
    border-bottom: 4px solid #a3a3a3;
}

.arrow-down {
    margin-top: auto;
    border-top: 4px solid #a3a3a3;
}

.arrow-down.dark {
    margin-top: 0;
    border-top-color: #505050;
}

.arrow-left, .arrow-right {
    width: 0;
    height: 0;
    border-top: 4px solid transparent;
    border-bottom: 4px solid transparent;
}

.arrow-left {
    border-right: 4px solid #a3a3a3;
}

.arrow-right {
    border-left: 4px solid #a3a3a3;
}

.board-title {
    margin: 9.5px 0 0 9.5px;
    font-size: 16px;
    line-height: 20px;
    color: #fff;
}

.board-sub {
    margin: 65px 0 0 7px;
    line-height: 16px;
    color: #f5f7fa;
    height: 87.5px;
}

/* cards */
.cards {
    display: grid;
    grid-template-columns: repeat(3, 567px);
    grid-auto-rows: 1008px;
    column-gap: 32px;
    row-gap: 34px;
    padding: 5px 0 0 4px;
}

.card {
    box-sizing: border-box;
    padding: 0 7px 0 7px;
    overflow: hidden;
    background-color: #2e3b4e;
    border: 2px solid #4a5568;
}

.card h2 {
    margin: 11px 0 0;
    padding: 0 0 7px;
    font-size: 24px;
    line-height: 28px;
    white-space: nowrap;
    color: #e2e8f0;
    border-bottom: 2px solid #2b2f38;
}

.card:nth-child(n+4) h2 {
    padding-bottom: 6px;
}

.card hr {
    margin: 7px 0 0;
    height: 2px;
    border: none;
    background-color: #edf0f4;
}

.link-row {
    display: flex;
    align-items: center;
    gap: 2.5px;
    height: 20px;
    margin-top: 7px;
}

.link-row.first {
    margin-top: 22px;
}

.link-row.ministry {
    margin-top: 24px;
}

.since {
    margin-top: 7px;
    font-size: 14.4px;
    font-style: italic;
    line-height: 21.5px;
    color: #8d99a8;
}

.summary {
    margin-top: 27px;
    padding-left: 20px;
    font-size: 14.4px;
    line-height: 22px;
    color: #e2e8f0;
}

.link-row + .summary {
    margin-top: 26px;
}

.summary > div {
    display: flex;
    align-items: center;
    white-space: nowrap;
}

.summary b {
    margin-right: 6px;
}

.ic-sum {
    width: 14px;
    height: 14px;
    margin-right: 5px;
    color: #cbd5e0;
}

.heads {
    display: grid;
    grid-template-columns: 278px 1fr;
    margin-top: 48px;
    padding-left: 20px;
}

.heads.second {
    margin-top: 46px;
}

.heads h4 {
    margin: 0;
    font-size: 12px;
    line-height: 16px;
    color: #a0aec0;
}

.stats {
    display: grid;
    grid-template-columns: 278px 1fr;
    margin-top: 31px;
    padding-left: 20px;
    color: #90ee90;
}

.heads.second + .stats {
    margin-top: 30px;
}

.stat {
    display: flex;
    align-items: center;
    height: 26.5px;
    padding-left: 3.5px;
    white-space: nowrap;
}

.stat.wide {
    grid-column: 1 / 3;
}

.stat b {
    margin-right: 12px;
}

.ic {
    width: 15px;
    height: 15px;
    margin-right: 10px;
}

.money {
    display: flex;
    align-items: center;
    height: 29.3px;
    padding-left: 5px;
    color: #90ee90;
    white-space: nowrap;
}

.money.first {
    margin-top: 3px;
}

.money a {
    margin-right: 12px;
}

.money b {
    font-size: 14.4px;
}

.ic-money {
    width: 14px;
    height: 14px;
    margin-right: 5px;
}

.ic-money + .ic-money {
    margin-right: 2px;
}

/* footer */
.foot-row {
    display: grid;
    align-items: center;
    padding-left: 7px;
}

.foot-row.two {
    grid-template-columns: 940px 1fr;
    height: 17px;
}

.foot-row.two > div:first-child {
    display: flex;
    align-items: center;
    gap: 2.5px;
}

.foot-row.three {
    grid-template-columns: 627px 627px 1fr;
    height: 32px;
}
```
